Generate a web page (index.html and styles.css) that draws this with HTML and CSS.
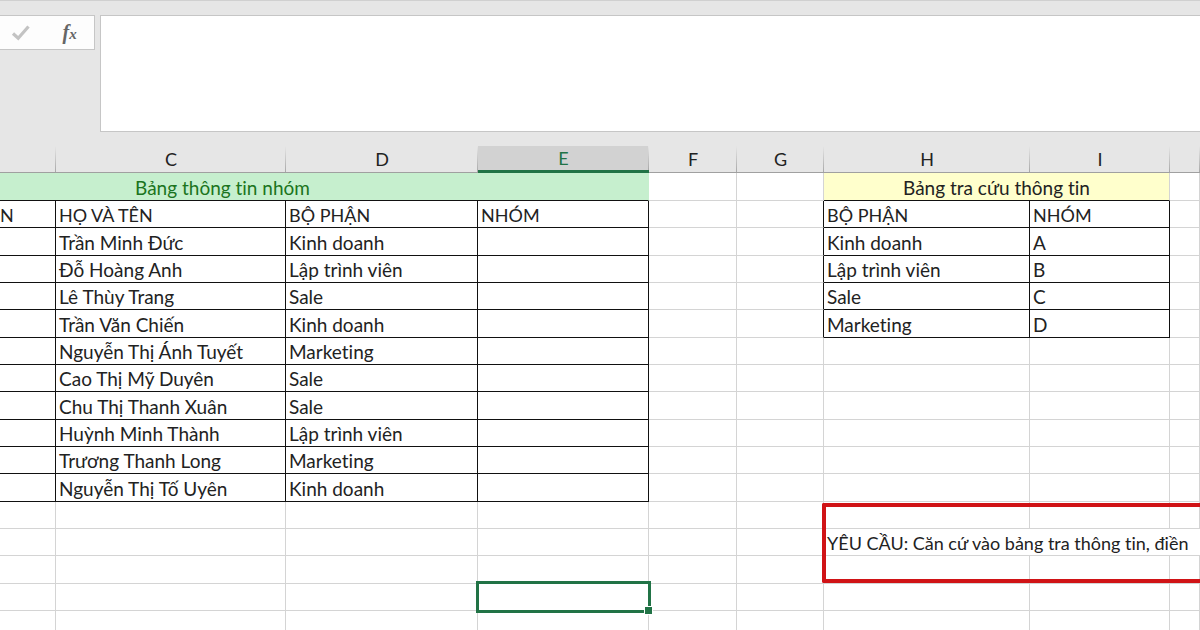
FILE: index.html
```html
<!DOCTYPE html>
<html lang="vi">
<head>
  <meta charset="UTF-8" />
  <meta name="viewport" content="width=device-width, initial-scale=1" />
  <title>Bảng thông tin nhóm</title>
  <link rel="stylesheet" href="styles.css">
</head>
<body>

<div class="formula-bar">
  <div class="tools">
    <button type="button" class="tool" aria-label="Enter">
      <svg width="20" height="18" viewBox="0 0 20 18"><path d="M2 9.5 L7.2 14.2 L17.5 2.5" fill="none" stroke="#c3c3c3" stroke-width="3.2"/></svg>
    </button>
    <button type="button" class="tool fx" aria-label="Insert function">f<span class="fx-x">x</span></button>
  </div>
  <textarea class="formula" aria-label="Formula"></textarea>
</div>

<table class="sheet">
  <colgroup>
    <col class="col-b"><col class="col-c"><col class="col-d"><col class="col-e"><col class="col-f">
    <col class="col-g"><col class="col-h"><col class="col-i"><col>
  </colgroup>
  <thead>
    <tr><th></th><th>C</th><th>D</th><th class="active">E</th><th>F</th><th>G</th><th>H</th><th>I</th><th></th></tr>
  </thead>
  <tbody>
    <tr class="titles"><td class="title green" colspan="4">Bảng thông tin nhóm</td><td></td><td></td><td class="title yellow" colspan="2">Bảng tra cứu thông tin</td><td></td></tr>
    <tr class="labels"><td class="box cut">N</td><td class="box">HỌ VÀ TÊN</td><td class="box">BỘ PHẬN</td><td class="box">NHÓM</td><td></td><td class="edge"></td><td class="box">BỘ PHẬN</td><td class="box">NHÓM</td><td></td></tr>
    <tr><td class="box"></td><td class="box">Trần Minh Đức</td><td class="box">Kinh doanh</td><td class="box"></td><td></td><td class="edge"></td><td class="box">Kinh doanh</td><td class="box">A</td><td></td></tr>
    <tr><td class="box"></td><td class="box">Đỗ Hoàng Anh</td><td class="box">Lập trình viên</td><td class="box"></td><td></td><td class="edge"></td><td class="box">Lập trình viên</td><td class="box">B</td><td></td></tr>
    <tr><td class="box"></td><td class="box">Lê Thùy Trang</td><td class="box">Sale</td><td class="box"></td><td></td><td class="edge"></td><td class="box">Sale</td><td class="box">C</td><td></td></tr>
    <tr><td class="box"></td><td class="box">Trần Văn Chiến</td><td class="box">Kinh doanh</td><td class="box"></td><td></td><td class="edge"></td><td class="box">Marketing</td><td class="box">D</td><td></td></tr>
    <tr><td class="box"></td><td class="box">Nguyễn Thị Ánh Tuyết</td><td class="box">Marketing</td><td class="box"></td><td></td><td></td><td></td><td></td><td></td></tr>
    <tr><td class="box"></td><td class="box">Cao Thị Mỹ Duyên</td><td class="box">Sale</td><td class="box"></td><td></td><td></td><td></td><td></td><td></td></tr>
    <tr><td class="box"></td><td class="box">Chu Thị Thanh Xuân</td><td class="box">Sale</td><td class="box"></td><td></td><td></td><td></td><td></td><td></td></tr>
    <tr><td class="box"></td><td class="box">Huỳnh Minh Thành</td><td class="box">Lập trình viên</td><td class="box"></td><td></td><td></td><td></td><td></td><td></td></tr>
    <tr><td class="box"></td><td class="box">Trương Thanh Long</td><td class="box">Marketing</td><td class="box"></td><td></td><td></td><td></td><td></td><td></td></tr>
    <tr><td class="box"></td><td class="box">Nguyễn Thị Tố Uyên</td><td class="box">Kinh doanh</td><td class="box"></td><td></td><td></td><td></td><td></td><td></td></tr>
    <tr><td></td><td></td><td></td><td></td><td></td><td></td><td></td><td></td><td></td></tr>
    <tr><td></td><td></td><td></td><td></td><td></td><td></td><td class="note anchor" colspan="3">YÊU CẦU: Căn cứ vào bảng tra thông tin, điền<div class="frame"></div></td></tr>
    <tr><td></td><td></td><td></td><td></td><td></td><td></td><td></td><td></td><td></td></tr>
    <tr><td></td><td></td><td></td><td class="anchor"><div class="selection"><span class="handle"></span></div></td><td></td><td></td><td></td><td></td><td></td></tr>
    <tr><td></td><td></td><td></td><td></td><td></td><td></td><td></td><td></td><td></td></tr>
  </tbody>
</table>

</body>
</html>
```

FILE: styles.css
```css
* { box-sizing: border-box; }
body { margin: 0; overflow: hidden; background: #e6e6e6; color: #222; font-family: Lato, "Open Sans", sans-serif; font-size: 19px; font-variant-ligatures: none; }

.formula-bar { display: flex; align-items: flex-start; gap: 5px; height: 146px; padding-top: 14px; border-top: 1px solid #d0d0d0; }
.tools { display: flex; align-items: center; width: 95px; height: 35px; background: #fdfdfd; border: 1px solid #c6c6c6; border-left: 0; }
.tool { display: flex; align-items: center; justify-content: center; width: 42px; height: 33px; padding: 0; border: 0; background: none; }
.fx { width: 54px; padding-left: 4px; color: #666; font: italic bold 20px "Liberation Serif", serif; }
.fx-x { font-size: 15px; padding-top: 4px; }
.formula { flex: 1; height: 117px; border: 1px solid #c6c6c6; border-right: 0; background: #fff; resize: none; outline: none; }

.sheet { width: 100%; table-layout: fixed; border-collapse: separate; border-spacing: 0; background: #fff; }
.col-b { width: 56px; }
.col-c { width: 230px; }
.col-d { width: 192px; }
.col-e { width: 171px; }
.col-f { width: 88px; }
.col-g { width: 87px; }
.col-h { width: 206px; }
.col-i { width: 140px; }

th { height: 27px; padding: 0; background: linear-gradient(#e6e6e6, #a8a8a8) right / 1px 100% no-repeat #e6e6e6; border-bottom: 1px solid #a0a0a0; font-size: 18px; font-weight: normal; line-height: 24px; }
th.active { background-color: #d2d2d2; border-bottom: 3px solid #217346; color: #217346; }

td { height: 27px; padding: 2px 3px 0; border-right: 1px solid #d4d4d4; border-bottom: 1px solid #d4d4d4; line-height: 24px; white-space: nowrap; }
tr.titles td { height: 28px; }
tr.labels td, td.note { font-size: 18px; }
tbody tr:nth-child(3n) td { height: 28px; }
td.box { border-color: #111; }
td.cut { padding-left: 0; }
td.edge { border-right-color: #111; }
td.title { border-bottom-color: #111; text-align: center; }
/* the green title is centred over columns that start left of the view */
td.green { padding-right: 206px; background: #c6efce; border-right-color: #c6efce; color: #1b7420; }
td.yellow { background: #ffffcc; }
td.anchor { position: relative; }
td.note { border-right: 0; }

.frame { position: absolute; top: -26px; left: -2px; right: 0; height: 80px; border: 4px solid #d01316; border-right: 0; border-radius: 2px 0 0 2px; }
.selection { position: absolute; top: -3px; left: -2px; right: -3px; bottom: -3px; border: 3px solid #217346; }
.handle { position: absolute; right: -5px; bottom: -5px; width: 9px; height: 9px; background: #217346; border: 1px solid #fff; }
```
